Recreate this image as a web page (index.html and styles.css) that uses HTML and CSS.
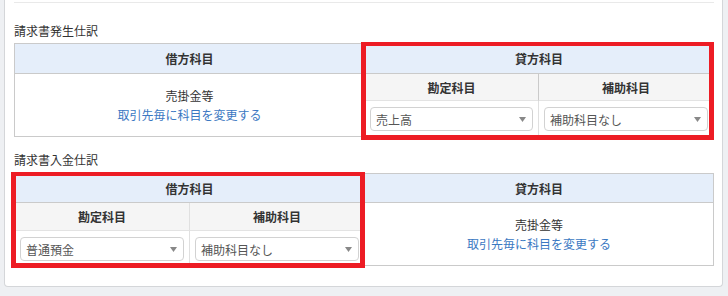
FILE: index.html
```html
<!DOCTYPE html>
<html lang="ja">
<head>
<meta charset="utf-8">
<title>仕訳設定</title>
<link rel="stylesheet" href="styles.css">
</head>
<body>
<div class="card">
  <div class="divider"></div>

  <section class="section">
    <div class="title">請求書発生仕訳</div>
    <div class="wrap">
      <div class="jt jt-a">
        <div class="c hd br bb">借方科目</div>
        <div class="c hd bb span2">貸方科目</div>
        <div class="c summary br rows2">
          <span>売掛金等</span>
          <a class="link" href="#">取引先毎に科目を変更する</a>
        </div>
        <div class="c sub br bbl">勘定科目</div>
        <div class="c sub bbl">補助科目</div>
        <div class="c sel brl">
          <div class="select"><span>売上高</span><svg width="7" height="5" viewBox="0 0 7 5"><path d="M0 0H7L3.5 5Z" fill="#888"/></svg></div>
        </div>
        <div class="c sel">
          <div class="select"><span>補助科目なし</span><svg width="7" height="5" viewBox="0 0 7 5"><path d="M0 0H7L3.5 5Z" fill="#888"/></svg></div>
        </div>
      </div>
      <div class="mark mark-a"></div>
    </div>
  </section>

  <section class="section second">
    <div class="title">請求書入金仕訳</div>
    <div class="wrap">
      <div class="jt jt-b">
        <div class="c hd br bb span2">借方科目</div>
        <div class="c hd bb">貸方科目</div>
        <div class="c sub brl bbl">勘定科目</div>
        <div class="c sub br bbl">補助科目</div>
        <div class="c summary rows2 col3">
          <span>売掛金等</span>
          <a class="link" href="#">取引先毎に科目を変更する</a>
        </div>
        <div class="c sel brl">
          <div class="select"><span>普通預金</span><svg width="7" height="5" viewBox="0 0 7 5"><path d="M0 0H7L3.5 5Z" fill="#888"/></svg></div>
        </div>
        <div class="c sel br">
          <div class="select"><span>補助科目なし</span><svg width="7" height="5" viewBox="0 0 7 5"><path d="M0 0H7L3.5 5Z" fill="#888"/></svg></div>
        </div>
      </div>
      <div class="mark mark-b"></div>
    </div>
  </section>
</div>
</body>
</html>
```

FILE: styles.css
```css
* { box-sizing: border-box; }

html, body {
  margin: 0;
  padding: 0;
  background: #eef0f3;
}

body {
  font-family: "Noto Sans CJK JP", "Noto Sans", sans-serif;
  font-size: 12px;
  line-height: 19px;
  color: #333;
}

.card {
  margin-left: 4px;
  width: 719px;
  background: #fff;
  border: 1px solid #d4d6d9;
  border-top: none;
  border-radius: 0 0 4px 4px;
  padding: 2px 8px 20px 9px;
}

.divider {
  border-top: 1px solid #e9e9e9;
}

.section { margin-top: 18px; }
.section.second { margin-top: 13px; }

.title {
  margin-bottom: 3px;
  color: #333;
}
.second .title { margin-bottom: 4px; }

.wrap { position: relative; }

.jt {
  display: grid;
  border: 1px solid #cacaca;
}
.jt-a {
  grid-template-columns: 350px 174px 174px;
  grid-template-rows: 30px 27px 35px;
}
.jt-b {
  grid-template-columns: 175px 175px 348px;
  grid-template-rows: 29px 28px 34px;
}

.c {
  display: flex;
  align-items: center;
  justify-content: center;
  min-width: 0;
}

.br { border-right: 1px solid #cacaca; }
.brl { border-right: 1px solid #e0e0e0; }
.bb { border-bottom: 1px solid #cacaca; }
.bbl { border-bottom: 1px solid #e3e3e3; }

.span2 { grid-column: span 2; }
.rows2 { grid-row: span 2; }
.col3 { grid-column: 3; }

.hd {
  background: #e5eefa;
  font-weight: bold;
  color: #333;
}

.sub {
  background: #f5f5f5;
  font-weight: bold;
  color: #333;
}

.summary {
  flex-direction: column;
  padding-bottom: 1px;
}

.link {
  color: #3b78c2;
  text-decoration: none;
}

.sel {
  align-items: flex-start;
  padding: 6px 5px 0 5px;
}

.select {
  width: 100%;
  height: 24px;
  border: 1px solid #d2d2d2;
  border-radius: 4px;
  background: #fff;
  display: flex;
  align-items: center;
  justify-content: space-between;
  padding: 0 6px 0 5px;
  color: #555;
}

.select svg { display: block; margin-top: 1px; }

.mark {
  position: absolute;
  border-style: solid;
  border-color: #ed1c24;
  border-width: 4px 5px 5px 5px;
  pointer-events: none;
}

.mark-a {
  left: 347px;
  top: -1px;
  width: 353px;
  height: 98px;
}

.mark-b {
  left: -3px;
  top: -1px;
  width: 354px;
  height: 96px;
}
```
